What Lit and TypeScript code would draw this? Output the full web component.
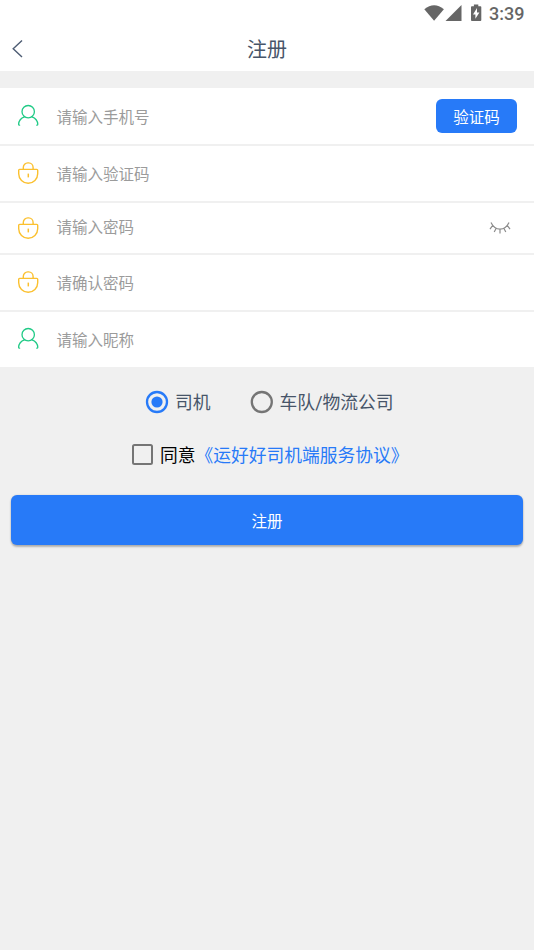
import { LitElement, html, css, svg } from "lit";
import { customElement, property } from "lit/decorators.js";

const userIcon = svg`<svg width="22" height="24" viewBox="0 0 22 24" fill="none" stroke="#20ca86" stroke-width="1.3" stroke-linecap="round">
  <circle cx="11.2" cy="7.7" r="6.2"/>
  <path d="M7.5 12.8C3.9 14.1 1.8 17.1 1.6 20.2c0 .7.4 1 1 1M14.9 12.8c3.6 1.3 5.7 4.3 5.9 7.4 0 .7-.4 1-1 1"/>
</svg>`;

const lockIcon = svg`<svg width="22" height="24" viewBox="0 0 22 24" fill="none" stroke="#fbc02f" stroke-width="1.4" stroke-linejoin="round">
  <path d="M6.3 8.4V6.4a4.5 4.5 0 0 1 4.5-4.5h.8a4.5 4.5 0 0 1 4.5 4.5v2"/>
  <path d="M2.6 8.4h17.2q.9 0 .9.9v3.5a9.5 9.5 0 0 1-19 0V9.3q0-.9.9-.9z"/>
  <path d="M11.3 12.6v3.8" stroke-width="1.5"/>
</svg>`;

@customElement("form-row")
class FormRow extends LitElement {
  @property() icon = "user";
  @property() hint = "";

  static styles = css`
    :host { display: flex; align-items: center; box-sizing: border-box; padding: 0 17px; background: #fff; }
    .icon { display: flex; width: 22px; height: 24px; }
    .hint { flex: 1; margin-left: 17.5px; padding-top: 3px; font-size: 15.5px; line-height: 24px; color: #9b9b9b; }
    :host([compact]) .hint { padding: 0; }
  `;

  render() {
    return html`<span class="icon">${this.icon === "lock" ? lockIcon : userIcon}</span>
      <span class="hint">${this.hint}</span><slot></slot>`;
  }
}

@customElement("app-root")
class AppRoot extends LitElement {
  static styles = css`
    :host { display: block; height: 950px; background: #f0f0f0; color: #475569; font-family: Roboto, "Noto Sans CJK SC", sans-serif; }
    .status { height: 27px; background: #fff; display: flex; justify-content: flex-end; box-sizing: border-box; padding: 0 9px 0 0; }
    .status svg { display: block; }
    .time { width: 36px; font-size: 18px; line-height: 28px; font-weight: 500; color: #666; white-space: nowrap; }
    .bar { height: 44px; background: #fff; display: grid; grid-template-columns: 34px 1fr 34px; align-items: center; }
    .bar svg { display: block; margin-left: 11px; }
    .title { text-align: center; font-size: 20px; line-height: 30px; padding-top: 2px; }
    .form { display: grid; grid-template-rows: 56px 55.5px 50.5px 55.5px 55.5px; row-gap: 1.5px; background: #f0f0f0; padding-top: 17px; }
    .code { width: 81px; height: 34px; border-radius: 6px; background: #277af8; color: #fff; font-size: 15.5px; line-height: 38px; text-align: center; }
    .eye { display: block; margin-right: 6px; }
    .roles { display: flex; height: 24px; margin: 23px 0 0 145px; align-items: center; font-size: 17.8px; line-height: 24px; }
    .roles span, .agree .text { padding-top: 1px; }
    .roles svg { display: block; margin-right: 6px; }
    .gap { width: 39px; }
    .agree { display: flex; height: 24px; margin: 29px 0 0 132px; align-items: center; font-size: 17.75px; line-height: 24px; color: #000; white-space: nowrap; }
    .box { box-sizing: border-box; width: 21px; height: 21px; margin: -1px 7px 0 0; border: 2px solid #757575; border-radius: 2.5px; }
    .link { color: #277af8; }
    .submit { height: 50px; margin: 28px 11px 0; border-radius: 6px; background: #277af8; color: #fff; font-size: 15.5px; line-height: 54.5px; text-align: center; box-shadow: 0 2px 2px rgba(0,0,0,.25), 0 0 2px rgba(0,0,0,.15); }
  `;

  render() {
    return html`
      <div class="status">
        <svg width="65" height="27" viewBox="0 0 65 27" fill="#666">
          <path d="M0.3 9.2Q10.1 1.2 19.9 9.2L10.1 20.8z"/>
          <path d="M37.5 5v16h-16z"/>
          <path fill-rule="evenodd" d="M49.9 4.5h4.4v1.7h2.1q.9 0 .9.9v13q0 .9-.9.9h-8.5q-.9 0-.9-.9v-13q0-.9.9-.9h2zM53 8l-4 6.5h2.4v4.3l4-6.4H53z"/>
        </svg>
        <span class="time">3:39</span>
      </div>
      <div class="bar">
        <svg width="14" height="20" viewBox="0 0 14 20" fill="none" stroke="#4d5c73" stroke-width="1.4"><path d="M11 1.4L2.2 9.7 11 18"/></svg>
        <span class="title">注册</span>
      </div>
      <div class="form">
        <form-row icon="user" hint="请输入手机号"><span class="code">验证码</span></form-row>
        <form-row icon="lock" hint="请输入验证码"></form-row>
        <form-row compact icon="lock" hint="请输入密码">
          <svg class="eye" width="22" height="14" viewBox="0 0 22 14" fill="none" stroke="#8c8c8c" stroke-width="1.2">
            <path d="M2 1.4Q5.2 8.1 11 8.1T20 1.4M3.7 4.4L1 8.2M7.2 7.2L5.2 11M11 8.1v4.4M14.8 7.2l2 3.8M18.3 4.4l2.7 3.8"/>
          </svg>
        </form-row>
        <form-row icon="lock" hint="请确认密码"></form-row>
        <form-row icon="user" hint="请输入昵称"></form-row>
      </div>
      <div class="roles">
        <svg width="24" height="24" viewBox="0 0 24 24"><circle cx="12" cy="12" r="10" fill="none" stroke="#277af8" stroke-width="2.3"/><circle cx="12" cy="12" r="5.6" fill="#277af8"/></svg>
        <span>司机</span><span class="gap"></span>
        <svg width="24" height="24" viewBox="0 0 24 24"><circle cx="11.8" cy="12" r="10" fill="none" stroke="#757575" stroke-width="2.3"/></svg>
        <span>车队/物流公司</span>
      </div>
      <div class="agree"><span class="box"></span><span class="text">同意<span class="link">《运好好司机端服务协议》</span></span></div>
      <div class="submit">注册</div>
    `;
  }
}
